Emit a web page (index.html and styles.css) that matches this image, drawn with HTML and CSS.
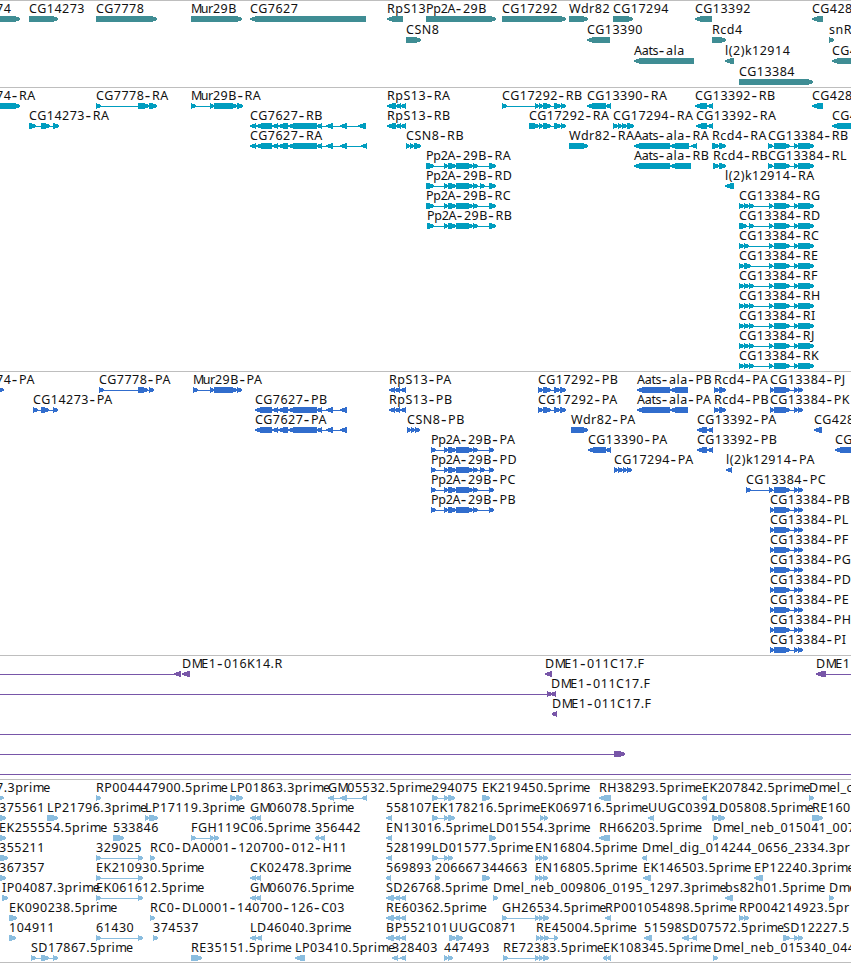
FILE: index.html
```html
<!DOCTYPE html>
<html>
	<head>
		<meta charset="UTF-8">
		<title>Genome browser</title>
		<link rel="stylesheet" href="styles.css">
	</head>
	<body>
		<div class="browser">
			<svg class="track gene" id="gene"></svg>
			<svg class="track transcript" id="transcript"></svg>
			<svg class="track protein" id="protein"></svg>
			<svg class="track bac" id="bac"></svg>
			<svg class="track est" id="est"></svg>
		</div>
		<script src="tracks.js" type="text/javascript" charset="utf-8"></script>
	</body>
</html>
```
FILE: styles.css
```css
body{
	margin: 0;
	background: #fff;
}
.browser{
	width: 851px;
	height: 963px;
	box-sizing: border-box;
	border-bottom: 1px solid #bebebe;
	overflow: hidden;
	display: flex;
	flex-direction: column;
}
.track{
	width: 100%;
	flex: none;
	box-sizing: border-box;
	border-top: 1px solid #bebebe;
	overflow: hidden;
}
.track text{
	font: 12.5px "Noto Sans", "Open Sans", sans-serif;
	letter-spacing: 0.5px;
	fill: #111;
}
.track .dash{
	font-size: 17px;
	letter-spacing: 1.7px;
}
.track .cap-m{
	letter-spacing: -1.7px;
}
.track .low-m{
	letter-spacing: -1.1px;
}
.track .tight{
	letter-spacing: -0.3px;
}
.track path,
.track rect{
	shape-rendering: crispEdges;
}
.gene{
	height: 87px;
	color: #3f8d94;
}
.transcript{
	height: 284px;
	color: #009dbf;
}
.protein{
	height: 284px;
	color: #316dcd;
}
.bac{
	height: 124px;
	color: #7856a8;
}
.est{
	height: 183px;
	color: #8abddf;
}
```
FILE: tracks.js
```js
'use strict';
var NS = 'http://www.w3.org/2000/svg';
var TIP = 6;

// row, label, label x, strand, exons (start, end, start, end, ...)
var gene = [
	[0,'74',-4,'>',[-20,20]],
	[0,'CG14273',29,'>',[29,58]],
	[0,'CG7778',96,'>',[96,157]],
	[0,'Mur29B',191,'>',[191,242]],
	[0,'CG7627',250,'<',[250,366]],
	[0,'RpS13',387,'<',[387,403]],
	[0,'Pp2A-29B',426,'>',[426,496]],
	[0,'CG17292',502,'>',[502,566]],
	[0,'Wdr82',569,'>',[569,588]],
	[0,'CG17294',613,'>',[613,633]],
	[0,'CG13392',695,'<',[695,712]],
	[0,'CG428',812,'<',[812,823]],
	[1,'CSN8',406,'>',[406,421]],
	[1,'CG13390',587,'<',[587,610]],
	[1,'Rcd4',712,'>',[712,726]],
	[1,'snR',829,'>',[829,834]],
	[2,'Aats-ala',634,'<',[634,694]],
	[2,'l(2)k12914',725,'<',[725,734]],
	[2,'CG4',832,'<',[832,860]],
	[3,'CG13384',739,'>',[739,813]]
];

var rps = [387,396,395,401,400,406];
var cg13384 = [769,773,774,790,794,798,798,814];
var transcript = [
	[0,'74-RA',-4,'>',[-20,20]],
	[0,'CG7778-RA',96,'>',[96,101,138,149,149,157]],
	[0,'Mur29B-RA',191,'>',[191,196,210,214,214,237,237,243]],
	[0,'RpS13-RA',387,'<',rps],
	[0,'CG17292-RB',502,'>',[502,507,535,539,539,543,543,551,554,561,561,566]],
	[0,'CG13390-RA',587,'<',[587,606,606,611]],
	[0,'CG13392-RB',695,'<',[695,707,707,713]],
	[0,'CG428',812,'<',[812,823]],
	[1,'CG14273-RA',29,'>',[29,36,41,50,53,59]],
	[1,'CG7627-RB',250,'<',[250,256,256,272,272,278,278,288,288,317,317,322,326,333,340,347,358,366]],
	[1,'RpS13-RB',387,'<',rps],
	[1,'CG17292-RA',529,'>',[529,539,539,543,543,551,554,561,561,566]],
	[1,'CG17294-RA',613,'>',[613,618,618,622,622,627,627,634]],
	[1,'CG13392-RA',696,'<',[696,707,707,713]],
	[1,'CG4',832,'<',[832,860]],
	[2,'CG7627-RA',250,'<',[250,256,256,272,272,278,278,288,288,317,317,322,326,333,340,347,361,367]],
	[2,'CSN8-RB',406,'>',[406,410,410,414,414,421]],
	[2,'Wdr82-RA',569,'>',[569,588]],
	[2,'Aats-ala-RA',634,'<',[634,670,670,689,691,697]],
	[2,'Rcd4-RA',712,'>',[712,719,719,726]],
	[2,'CG13384-RB',768,'>',[768,773,774,790,794,798,798,814]],
	[3,'Pp2A-29B-RA',426,'>',[426,434,444,448,448,456,456,473,473,478,489,496]],
	[3,'Aats-ala-RB',634,'<',[634,670,670,691]],
	[3,'Rcd4-RB',713,'>',[713,719,719,726]],
	[3,'CG13384-RL',768,'>',[768,773,774,790,794,798,798,814]],
	[4,'Pp2A-29B-RD',426,'>',[426,434,444,448,448,456,456,473,473,478,480,485,489,496]],
	[4,'l(2)k12914-RA',725,'<',[725,734]],
	[5,'Pp2A-29B-RC',426,'>',[426,434,444,448,448,456,456,473,473,478,489,496]],
	[5,'CG13384-RG',739,'>',[739,744,744,749,749,754].concat(cg13384)],
	[6,'Pp2A-29B-RB',427,'>',[427,434,444,448,448,456,456,473,473,478,489,496]],
	[6,'CG13384-RD',739,'>',[739,747,749,754].concat(cg13384)],
	[7,'CG13384-RC',739,'>',[739,744,744,749].concat(cg13384)],
	[8,'CG13384-RE',739,'>',[739,744,744,751].concat(cg13384)],
	[9,'CG13384-RF',739,'>',[739,744,744,749,749,754].concat(cg13384)],
	[10,'CG13384-RH',739,'>',[739,744,744,749,749,754].concat(cg13384)],
	[11,'CG13384-RI',739,'>',[739,744,744,749,749,754].concat(cg13384)],
	[12,'CG13384-RJ',739,'>',[739,744,744,749,749,754].concat(cg13384)],
	[13,'CG13384-RK',739,'>',[739,744,744,749,749,754].concat(cg13384)]
];

var cg7627p = [255,272,272,278,278,288,288,317,317,322,326,333,340,347];
var pp2ap = [431,436,444,448,448,456,456,473,473,478,489,494];
var cg13384p = [770,774,774,790,794,798,798,803];
var protein = [
	[0,'74-PA',-4,'>',[-10,4]],
	[0,'CG7778-PA',99,'>',[99,104,138,148,149,154]],
	[0,'Mur29B-PA',193,'>',[193,198,210,214,214,237,237,242]],
	[0,'RpS13-PA',389,'<',[389,395,395,400,400,406]],
	[0,'CG17292-PB',538,'>',[538,543,543,551,554,560,560,566]],
	[0,'Aats-ala-PB',637,'<',[637,670,670,688]],
	[0,'Rcd4-PA',714,'>',[714,719,719,726]],
	[0,'CG13384-PJ',770,'>',cg13384p],
	[1,'CG14273-PA',33,'>',[33,38,41,49,53,58]],
	[1,'CG7627-PB',255,'<',cg7627p],
	[1,'RpS13-PB',389,'<',[389,395,395,400,400,406]],
	[1,'CG17292-PA',538,'>',[538,543,543,551,554,560,560,566]],
	[1,'Aats-ala-PA',637,'<',[637,670,670,688]],
	[1,'Rcd4-PB',714,'>',[714,719,719,726]],
	[1,'CG13384-PK',770,'>',cg13384p],
	[2,'CG7627-PA',255,'<',cg7627p],
	[2,'CSN8-PB',407,'>',[407,411,411,415,415,420]],
	[2,'Wdr82-PA',571,'>',[571,588]],
	[2,'CG13392-PA',697,'<',[697,707,707,713]],
	[2,'CG428',814,'<',[814,822]],
	[3,'Pp2A-29B-PA',431,'>',pp2ap],
	[3,'CG13390-PA',588,'<',[588,606,606,611]],
	[3,'CG13392-PB',697,'<',[697,707,707,713]],
	[3,'CG',835,'<',[835,860]],
	[4,'Pp2A-29B-PD',431,'>',[431,436,444,448,448,456,456,473,473,478,480,485,489,494]],
	[4,'CG17294-PA',614,'>',[614,618,618,623,623,627,627,632]],
	[4,'l(2)k12914-PA',726,'<',[726,732]],
	[5,'Pp2A-29B-PC',431,'>',pp2ap],
	[5,'CG13384-PC',746,'>',[746,751,769,773,774,790,794,798,798,803]],
	[6,'Pp2A-29B-PB',431,'>',pp2ap],
	[6,'CG13384-PB',770,'>',cg13384p],
	[7,'CG13384-PL',770,'>',cg13384p],
	[8,'CG13384-PF',770,'>',cg13384p],
	[9,'CG13384-PG',770,'>',cg13384p],
	[10,'CG13384-PD',770,'>',cg13384p],
	[11,'CG13384-PE',770,'>',cg13384p],
	[12,'CG13384-PH',770,'>',cg13384p],
	[13,'CG13384-PI',770,'>',cg13384p]
];

var bac = [
	[0,'',0,'<',[-20,-10,174,181]],
	[0,'DME1-016K14.R',182,'<',[182,190]],
	[0,'DME1-011C17.F',545,'<',[545,552]],
	[0,'DME1',816,'<',[816,826,870,880]],
	[1,'',0,'>',[-20,-10,547,552]],
	[1,'DME1-011C17.F',551,'<',[551,556]],
	[2,'DME1-011C17.F',552,'<',[552,557]],
	[3,'',0,'>',[-20,-10,870,880]],
	[4,'',0,'>',[-20,-10,614,625]],
	[5,'',0,'>',[-20,-10,870,880]]
];

var est = [
	[0,'7.3prime',-4,'>',[-10,4]],
	[0,'RP004447900.5prime',96,'>',[96,101]],
	[0,'LP01863.3prime',230,'>',[230,236,236,243]],
	[0,'GM05532.5prime',328,'<',[328,334,340,347,362,367]],
	[0,'294075',432,'>',[432,438,444,448,448,455]],
	[0,'EK219450.5prime',482,'>',[482,490]],
	[0,'RH38293.5prime',599,'<',[599,611]],
	[0,'EK207842.5prime',702,'<',[702,707]],
	[0,'Dmel_c',809,'>',[809,814]],
	[1,'375561',-1,'>',[-6,6]],
	[1,'LP21796.3prime',47,'>',[47,58]],
	[1,'LP17119.3prime',145,'>',[145,149,149,158]],
	[1,'GM06078.5prime',250,'<',[250,256,256,261]],
	[1,'558107',386,'<',[386,392]],
	[1,'EK178216.5prime',432,'>',[432,438,444,448,448,455]],
	[1,'EK069716.5prime',540,'>',[540,544,544,548]],
	[1,'UUGC0392',648,'<',[648,654]],
	[1,'LD05808.5prime',712,'>',[712,718,718,725]],
	[1,'RE160',812,'>',[812,823]],
	[2,'EK255554.5prime',-1,'>',[-6,6]],
	[2,'533846',113,'>',[113,124]],
	[2,'FGH119C06.5prime',191,'>',[191,196,210,214,214,219]],
	[2,'356442',315,'<',[315,319,319,325]],
	[2,'EN13016.5prime',386,'<',[386,392]],
	[2,'LD01554.3prime',489,'>',[489,496]],
	[2,'RH66203.5prime',599,'<',[599,610]],
	[2,'Dmel_neb_015041_007',713,'>',[713,718]],
	[3,'355211',-1,'>',[-8,8]],
	[3,'329025',96,'>',[96,101,138,143]],
	[3,'RC0-DA0001-120700-012-H11',150,'>',[150,155]],
	[3,'528199',386,'<',[386,392]],
	[3,'LD01577.5prime',432,'>',[432,438,444,448,448,453]],
	[3,'EN16804.5prime',535,'>',[535,539,539,543,543,548]],
	[3,'Dmel_dig_014244_0656_2334.3pr',642,'<',[642,647]],
	[4,'367357',-1,'>',[-6,6]],
	[4,'EK210930.5prime',96,'>',[96,101,138,143]],
	[4,'CK02478.3prime',250,'<',[250,256,256,261]],
	[4,'569893',386,'<',[386,391]],
	[4,'206667',435,'>',[435,440]],
	[4,'344663',482,'>',[482,490]],
	[4,'EN16805.5prime',535,'>',[535,539,539,543,543,548]],
	[4,'EK146503.5prime',643,'<',[643,651]],
	[4,'EP12240.3prime',754,'<',[754,763]],
	[5,'IP04087.3prime',2,'>',[2,8]],
	[5,'EK061612.5prime',96,'>',[96,101,138,143]],
	[5,'GM06076.5prime',250,'<',[250,256,256,261]],
	[5,'SD26768.5prime',386,'<',[386,394,394,400,400,406]],
	[5,'Dmel_neb_009806_0195_1297.3prime',493,'>',[493,498]],
	[5,'bs82h01.5prime',725,'<',[725,733]],
	[5,'Dme',829,'>',[829,834]],
	[6,'EK090238.5prime',9,'>',[9,17]],
	[6,'RC0-DL0001-140700-126-C03',150,'>',[150,155]],
	[6,'RE60362.5prime',386,'<',[386,394,394,400,400,406]],
	[6,'GH26534.5prime',502,'>',[502,507,535,539,539,543,543,549]],
	[6,'RP001054898.5prime',605,'<',[605,611]],
	[6,'RP004214923.5pr',739,'>',[739,744,744,749]],
	[7,'104911',9,'>',[9,16]],
	[7,'61430',96,'>',[96,101,138,143]],
	[7,'374537',153,'>',[153,158]],
	[7,'LD46040.3prime',250,'<',[250,256,256,262]],
	[7,'BP552101',386,'<',[386,394,394,400,400,406]],
	[7,'UUGC0871',449,'>',[449,456,456,463]],
	[7,'RE45004.5prime',536,'>',[536,540,540,544,544,549,554,558]],
	[7,'51598',644,'<',[644,652]],
	[7,'SD07572.5prime',682,'<',[682,689,692,697]],
	[7,'SD12227.5',783,'>',[783,790,794,798,798,803]],
	[8,'SD17867.5prime',31,'>',[31,36,41,49,53,58]],
	[8,'RE35151.5prime',191,'>',[191,202]],
	[8,'LP03410.5prime',295,'<',[295,305]],
	[8,'328403',392,'<',[392,398,400,406]],
	[8,'447493',444,'>',[444,448,448,453]],
	[8,'RE72383.5prime',503,'>',[503,508,535,539,539,543,543,549]],
	[8,'EK108345.5prime',603,'<',[603,607,607,611]],
	[8,'Dmel_neb_015340_044',713,'>',[713,718]]
];

// pieces of a label that get their own spacing
var special = {'-': 'dash', 'M': 'cap-m', 'm': 'low-m', 'Pp2A': 'tight', 'Aats': 'tight', 'ur': 'tight'};

function add(svg,tag,attrs){
	var el = document.createElementNS(NS,tag);
	for(var k in attrs){
		el.setAttribute(k,attrs[k]);
	}
	svg.appendChild(el);
	return el;
}

function label(svg,str,x,y){
	var text = add(svg,'text',{x: x, y: y});
	var parts = str.split(/(Pp2A|Aats|ur|[-Mm])/);
	var drop = 0;
	for(var i = 0; i < parts.length; i++){
		if(!parts[i]) continue;
		var span = add(text,'tspan',{});
		if(special[parts[i]]){
			span.setAttribute('class',special[parts[i]]);
		}
		if(parts[i] == '-'){
			span.setAttribute('dx',0.5);
			span.setAttribute('dy',1);
			drop = 1;
		}else if(drop){
			span.setAttribute('dy',-1);
			drop = 0;
		}
		span.textContent = parts[i];
	}
}

function exon(s,e,y,strand){
	var t = Math.min(TIP,e - s);
	if(strand == '>'){
		return 'M' + s + ' ' + y + 'H' + (e - t) + 'L' + e + ' ' + (y + 2) + 'V' + (y + 4) + 'L' + (e - t) + ' ' + (y + 6) + 'H' + s + 'Z';
	}
	return 'M' + e + ' ' + y + 'H' + (s + t) + 'L' + s + ' ' + (y + 2) + 'V' + (y + 4) + 'L' + (s + t) + ' ' + (y + 6) + 'H' + e + 'Z';
}

function draw(id,data,pitch){
	var svg = document.getElementById(id);
	for(var i = 0; i < data.length; i++){
		var f = data[i];
		var y = f[0] * pitch;
		var ex = f[4];
		var d = '';
		for(var j = 0; j < ex.length; j += 2){
			d += exon(ex[j],ex[j + 1],y + 15,f[3]);
		}
		if(ex.length > 2){
			add(svg,'rect',{x: ex[0], y: y + 18, width: ex[ex.length - 1] - ex[0], height: 1, fill: 'currentColor'});
		}
		add(svg,'path',{d: d, fill: 'currentColor'});
		if(f[1]){
			label(svg,f[1],f[2],y + 12);
		}
	}
}

draw('gene',gene,21);
draw('transcript',transcript,20);
draw('protein',protein,20);
draw('bac',bac,20);
draw('est',est,20);
```
